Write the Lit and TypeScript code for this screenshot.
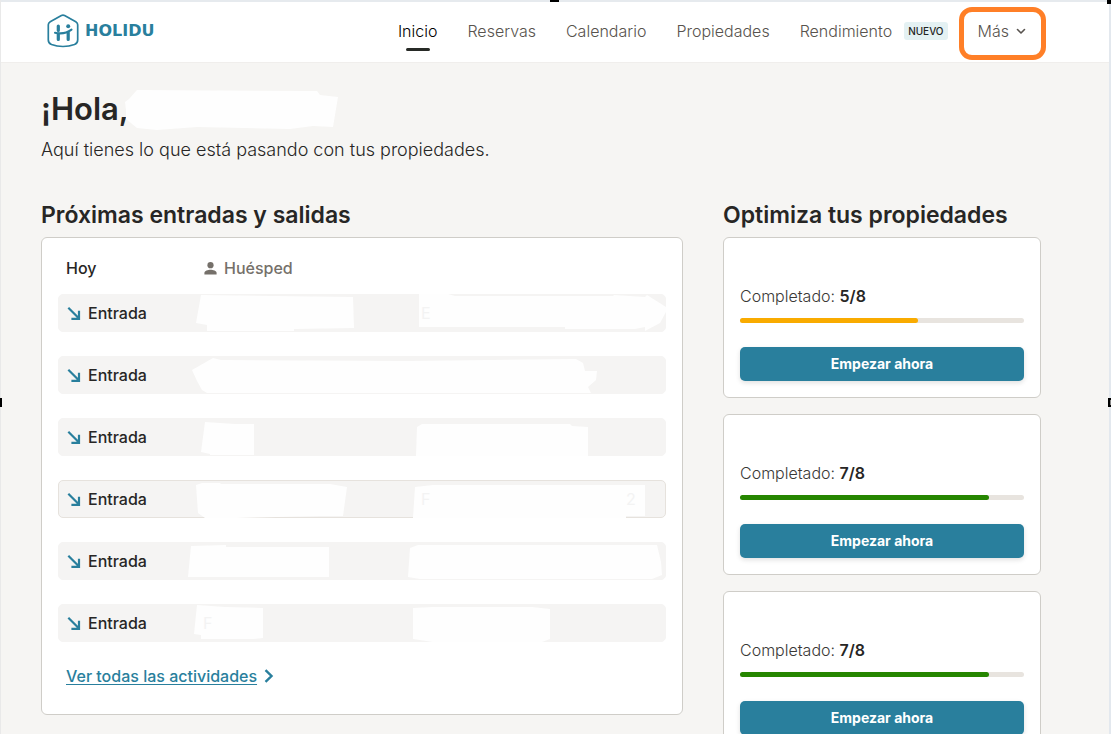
import { LitElement, html, css, svg } from "lit";
import { customElement } from "lit/decorators.js";

interface Trace {
  x: number;
  text: string;
}

interface Activity {
  guest: string;
  property: string;
  traces: Trace[];
  active?: boolean;
}

interface Property {
  done: number;
  total: number;
}

const activities: Activity[] = [
  {
    guest: "143,1 295,3 296,34 236,35 236,37 149,37 149,31 138,29",
    property:
      "361,0 390,0 397,2 555,2 556,1 587,3 589,1 608,13 608,18 602,29 587,37 587,33 577,35 507,35 507,33 361,33",
    traces: [{ x: 363, text: "E" }],
  },
  {
    guest: "134,14 155,2 163,4 350,5 518,3 525,7 527,15 539,15 538,24 530,31 533,37 149,37 144,34 139,25",
    property: "",
    traces: [],
  },
  {
    guest: "147,4 177,6 196,6 196,37 152,37 152,36 143,34 145,19",
    property: "359,9 364,6 512,6 514,8 530,9 530,38 358,38",
    traces: [],
  },
  {
    guest: "138,5 144,3 162,3 163,4 272,4 289,7 285,36 264,36 178,38 147,38 140,33",
    property: "357,7 375,5 587,5 587,36 568,36 568,38 355,38",
    traces: [
      { x: 363, text: "F" },
      { x: 568, text: "2" },
    ],
    active: true,
  },
  {
    guest: "133,4 168,3 168,5 271,5 271,35 130,35",
    property: "352,6 360,3 599,3 603,20 604,33 594,37 362,37 350,35",
    traces: [],
  },
  {
    guest: "139,1 167,3 205,4 205,34 195,35 143,35 143,31 136,30",
    property: "355,4 375,3 474,3 492,5 492,35 484,38 375,38 355,35",
    traces: [{ x: 145, text: "F" }],
  },
];

const properties: Property[] = [
  { done: 5, total: 8 },
  { done: 7, total: 8 },
  { done: 7, total: 8 },
];

@customElement("app-header")
export class AppHeader extends LitElement {
  static styles = css`
    :host {
      display: block;
      background: #fff;
      border-top: 2px solid #e6eaee;
      border-bottom: 1px solid #f0eeec;
    }
    .bar {
      display: flex;
      align-items: center;
      justify-content: space-between;
      height: 58px;
      padding: 0 82px 2px 46px;
    }
    .brand {
      display: flex;
      align-items: center;
      gap: 6px;
      color: #297f9d;
      text-decoration: none;
      font: 700 16px/24px "DejaVu Sans", sans-serif;
    }
    .nav {
      display: flex;
      gap: 30px;
      font-size: 16px;
      line-height: 24px;
      font-weight: 300;
    }
    .link {
      color: #58534e;
      text-decoration: none;
    }
    .current {
      position: relative;
      color: #000;
    }
    .current::after {
      content: "";
      position: absolute;
      left: 50%;
      bottom: -8px;
      width: 24px;
      height: 3px;
      margin-left: -12px;
      border-radius: 2px;
      background: #272a26;
    }
    .with-badge {
      display: flex;
      align-items: center;
      gap: 12px;
    }
    .badge {
      padding: 0 4px;
      border-radius: 3px;
      background: #e4f1f3;
      color: #1f2423;
      font-size: 10px;
      line-height: 18px;
      font-weight: 500;
    }
    .more {
      position: relative;
      display: flex;
      align-items: center;
      gap: 6px;
      margin: 0;
      padding: 0;
      border: 0;
      background: none;
      color: #58534e;
      font: inherit;
    }
    .more::after {
      content: "";
      position: absolute;
      inset: -12px -19px -17px -19px;
      border: 5px solid #ff7f27;
      border-radius: 13px;
    }
  `;

  render() {
    return html`
      <header class="bar">
        <a class="brand" href="#">
          <svg width="32" height="34" viewBox="0 0 32 34" fill="none" stroke="currentColor" aria-hidden="true">
            <path
              d="M14.4 1.6 3.2 7.7C2 8.4 1.3 9.500 1.3 10.800V26c0 2.200 1 3.600 3.200 4.500 6.800 2.600 16.200 2.600 23 0 2.200-.9 3.200-2.300 3.200-4.500V10.800c0-1.300-.7-2.400-1.900-3.100L17.600 1.600a3.300 3.300 0 0 0-3.200 0Z"
              stroke-width="1.700"
            />
            <path d="M11.300 12v4.500M11.300 20V25.500M21.200 18.500V25.500" stroke-width="3.200" stroke-linecap="round" />
            <path d="M8 18.700c5 1.300 11.500.6 16.500-3" stroke-width="2.100" stroke-linecap="round" />
            <circle cx="21.200" cy="12.200" r="2" fill="currentColor" stroke="none" />
          </svg>
          HOLIDU
        </a>
        <nav class="nav" aria-label="Principal">
          <a class="link current" href="#" aria-current="page">Inicio</a>
          <a class="link" href="#">Reservas</a>
          <a class="link" href="#">Calendario</a>
          <a class="link" href="#">Propiedades</a>
          <a class="link with-badge" href="#">Rendimiento <span class="badge">NUEVO</span></a>
          <button class="more" type="button">
            Más
            <svg width="12" height="12" viewBox="0 0 12 12" fill="none" stroke="currentColor" stroke-width="1.600" aria-hidden="true">
              <path d="M2.500 4.500 6 8l3.500-3.500" stroke-linecap="round" stroke-linejoin="round" />
            </svg>
          </button>
        </nav>
      </header>
    `;
  }
}

@customElement("activity-card")
export class ActivityCard extends LitElement {
  static styles = css`
    :host {
      display: block;
      padding: 16px 16px 26px;
      border: 1px solid #cfcdc8;
      border-radius: 6px;
      background: #fff;
    }
    .table,
    .body {
      display: grid;
    }
    .table {
      gap: 12px;
    }
    .body {
      gap: 24px;
    }
    .row {
      display: grid;
      grid-template-columns: 138px 216px 1fr;
      align-items: center;
      padding: 0 8px;
    }
    .head {
      height: 28px;
    }
    .entry {
      position: relative;
      height: 36px;
      border: 1px solid #f5f4f3;
      border-radius: 5px;
      background: #f5f4f3;
    }
    .active {
      border-color: #e6e2dd;
    }
    .cell {
      display: flex;
      align-items: center;
      gap: 7px;
      padding: 0;
      color: #272625;
      font-size: 16px;
      line-height: 24px;
      font-weight: 500;
      text-align: left;
    }
    .kind {
      gap: 6px;
    }
    .muted {
      color: #75706a;
    }
    .arrow {
      color: #297f9d;
    }
    .cover {
      position: absolute;
      left: -1px;
      top: -1px;
      overflow: visible;
    }
    .patch {
      fill: #fefefe;
    }
    .trace {
      fill: #f3f3f3;
      font-size: 16px;
    }
    .all {
      display: inline-flex;
      align-items: center;
      gap: 6px;
      margin: 22px 8px 0;
      color: #297f9d;
      font-size: 16px;
      line-height: 24px;
      font-weight: 500;
      text-decoration: none;
    }
    .label {
      text-decoration: underline;
      text-underline-offset: 2px;
    }
  `;

  render() {
    return html`
      <table class="table">
        <thead>
          <tr class="row head">
            <th class="cell" scope="col">Hoy</th>
            <th class="cell muted" scope="col">
              <svg width="13" height="13" viewBox="0 0 13 13" fill="currentColor" aria-hidden="true">
                <circle cx="6.500" cy="3.200" r="3.100" />
                <path d="M.4 12.500v-1.700C.4 8.800 4 7.700 6.500 7.700s6.100 1.100 6.100 3.100v1.700Z" />
              </svg>
              Huésped
            </th>
          </tr>
        </thead>
        <tbody class="body">
          ${activities.map(
            (a) => html`
              <tr class="row entry ${a.active ? "active" : ""}">
                <td class="cell kind">
                  <svg class="arrow" width="15" height="15" viewBox="0 0 15 15" fill="none" stroke="currentColor" stroke-width="2.200" aria-hidden="true">
                    <path d="M1.300 1.800 11.800 12.300M12 4.800V12.900H4.400" />
                  </svg>
                  Entrada
                </td>
                <td>
                  <svg class="cover" width="608" height="38" viewBox="0 0 608 38">
                    <polygon class="patch" points=${a.guest} />
                    <polygon class="patch" points=${a.property} />
                    ${a.traces.map((t) => svg`<text class="trace" x=${t.x} y="25">${t.text}</text>`)}
                  </svg>
                </td>
              </tr>
            `
          )}
        </tbody>
      </table>
      <a class="all" href="#">
        <span class="label">Ver todas las actividades</span>
        <svg width="12" height="14" viewBox="0 0 12 14" fill="none" stroke="currentColor" stroke-width="2.400" aria-hidden="true">
          <path d="M2.500 1.200 8.500 7l-6 5.800" />
        </svg>
      </a>
    `;
  }
}

@customElement("property-list")
export class PropertyList extends LitElement {
  static styles = css`
    :host {
      display: grid;
      gap: 16px;
    }
    .card {
      display: flex;
      flex-direction: column;
      padding: 46px 16px 16px;
      border: 1px solid #cfcdc8;
      border-radius: 6px;
      background: #fff;
    }
    .status {
      margin: 0 0 10px;
      color: #3a3836;
      font-size: 16px;
      line-height: 24px;
      font-weight: 300;
    }
    .count {
      color: #272625;
      font-weight: 600;
    }
    .track {
      height: 5px;
      margin-bottom: 24px;
      border-radius: 3px;
      background: #e8e4df;
    }
    .fill {
      height: 5px;
      border-radius: 3px;
      background: #268600;
    }
    .low {
      background: #f9ab00;
    }
    .start {
      height: 34px;
      padding: 0;
      border: 0;
      border-radius: 5px;
      background: #297f9d;
      box-shadow: 0 2px 5px rgba(0, 0, 0, 0.12);
      color: #fff;
      font: inherit;
      font-size: 14px;
      line-height: 20px;
      font-weight: 700;
    }
  `;

  render() {
    return properties.map(
      (p) => html`
        <article class="card">
          <p class="status">Completado: <span class="count">${p.done}/${p.total}</span></p>
          <div
            class="track"
            role="progressbar"
            aria-label="Completado"
            aria-valuenow=${p.done}
            aria-valuemax=${p.total}
          >
            <div class="fill ${p.done < 6 ? "low" : ""}" style="width: ${(p.done / p.total) * 100}%"></div>
          </div>
          <button class="start" type="button">Empezar ahora</button>
        </article>
      `
    );
  }
}

@customElement("app-root")
export class AppRoot extends LitElement {
  static styles = css`
    :host {
      position: relative;
      display: block;
      box-sizing: border-box;
      min-height: 100vh;
      border-left: 1px solid #e9e9e9;
      border-right: 2px solid #e3e8ee;
      background: #f6f5f3;
      font-family: Inter, sans-serif;
      color: #272625;
    }
    .main {
      padding: 26px 68px 16px 40px;
    }
    .title {
      position: relative;
      margin: 0;
      font-size: 31px;
      line-height: 40px;
      font-weight: 600;
    }
    .cover {
      position: absolute;
      left: 76px;
      top: 1px;
    }
    .intro {
      margin: 7px 0 35px;
      font-size: 18px;
      line-height: 28px;
      font-weight: 300;
    }
    .columns {
      display: grid;
      grid-template-columns: minmax(0, 1fr) 318px;
      gap: 40px;
      align-items: start;
    }
    .heading {
      margin: 0 0 6px;
      font-size: 23px;
      line-height: 32px;
      font-weight: 600;
    }
    .handle {
      position: absolute;
      box-sizing: border-box;
      border: 2px solid #000;
      background: #888;
    }
    .top {
      top: 0;
      left: 549px;
      width: 9px;
      height: 2px;
      border-top: 0;
    }
    .left {
      top: 398px;
      left: -1px;
      width: 2px;
      height: 9px;
      border-left: 0;
    }
    .right {
      top: 398px;
      right: -2px;
      width: 3px;
      height: 9px;
      border-right: 0;
    }
    .corner {
      top: 0;
      right: -2px;
      width: 3px;
      height: 2px;
    }
  `;

  render() {
    return html`
      <app-header></app-header>
      <main class="main">
        <h1 class="title">
          ¡Hola,
          <svg class="cover" width="222" height="41" viewBox="0 0 222 41" fill="#fefefe" aria-hidden="true">
            <polygon points="8,12 12,9 20,0 200,1 203,5 221,7 216,37 196,36 173,39 80,37 40,40 20,38 9,29 9,20" />
          </svg>
        </h1>
        <p class="intro">Aquí tienes lo que está pasando con tus propiedades.</p>
        <div class="columns">
          <section>
            <h2 class="heading">Próximas entradas y salidas</h2>
            <activity-card></activity-card>
          </section>
          <section>
            <h2 class="heading">Optimiza tus propiedades</h2>
            <property-list></property-list>
          </section>
        </div>
      </main>
      <span class="handle top"></span>
      <span class="handle left"></span>
      <span class="handle right"></span>
      <span class="handle corner"></span>
    `;
  }
}
